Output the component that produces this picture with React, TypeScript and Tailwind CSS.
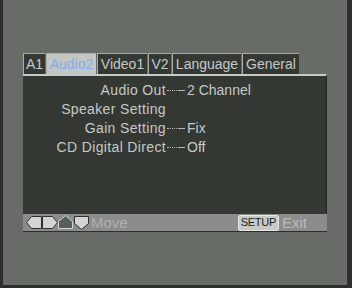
const tabs = [
  { label: "A1", w: "w-[22px]" },
  { label: "Audio2", w: "w-[50px]", active: true },
  { label: "Video1", w: "w-[50px]" },
  { label: "V2", w: "w-[23px]" },
  { label: "Language", w: "w-[69px]" },
  { label: "General", w: "w-[57px]" },
]

const rows = [
  { label: "Audio Out", value: "2 Channel" },
  { label: "Speaker Setting", value: "" },
  { label: "Gain Setting", value: "Fix" },
  { label: "CD Digital Direct", value: "Off" },
]

const Leader = () => (
  <span className="flex items-center ml-[1px] w-[18px] h-[19px]">
    <span className="w-[10px] border-t border-dotted border-[#b8bab8]"></span>
    <span className="w-[7px] ml-[1px] border-t border-[#b8bab8]"></span>
  </span>
)

const App = () => {
  return (
    <div className="w-[352px] h-[288px] bg-[#2c2f2c] overflow-hidden" style={{ fontFamily: '"Liberation Sans", Arial, sans-serif' }}>
      <div className="w-[344px] h-[285px] ml-[3px] bg-[#676c67] pl-[20px] pt-[53px]">
        <div className="flex gap-[1px] h-[21px]">
          {tabs.map((t) => (
            <div
              key={t.label}
              className={`${t.w} h-[21px] flex items-center justify-center border-t border-l border-[#a9aca9] text-[14px] leading-none ${
                t.active ? "bg-[#c4c6c4] text-[#7fb0f0]" : "bg-[#333833] text-[#c6c8c6]"
              }`}
            >
              {t.label}
            </div>
          ))}
        </div>
        <div className="w-[304px] h-[140px] bg-[#333833] border-t-2 border-[#c8cac8] border-r border-r-[#222522] pt-[5px]">
          {rows.map((r) => (
            <div key={r.label} className="flex h-[19px] items-center text-[14px] text-[#c6c8c6] leading-[19px]">
              <span className="w-[143px] text-right tracking-[0.35px]">{r.label}</span>
              {r.value && <Leader />}
              {r.value && <span className="ml-[2px]">{r.value}</span>}
            </div>
          ))}
        </div>
        <div className="w-[304px] h-[18px] bg-[#8a8d8a] border-b border-[#2a2d2a] flex items-center pl-[3px]">
          <svg width="64" height="15" viewBox="0 0 64 15">
            <polygon points="0.5,7.5 5.5,1.5 15.5,1.5 15.5,13.5 5.5,13.5" fill="#d2d4d2" stroke="#2e302e" />
            <polygon points="16.5,1.5 26.5,1.5 31.5,7.5 26.5,13.5 16.5,13.5" fill="#d2d4d2" stroke="#2e302e" />
            <polygon points="32.5,6.5 39.5,0.5 46.5,6.5 46.5,13.5 32.5,13.5" fill="#576057" stroke="#d2d4d2" />
            <polygon points="48.5,1.5 62.5,1.5 62.5,8.5 55.5,14.5 48.5,8.5" fill="#d2d4d2" stroke="#2e302e" />
          </svg>
          <span className="text-[15px] text-[#aeb1ae] leading-none ml-[1px]">Move</span>
          <span className="ml-auto h-[16px] px-[2px] flex items-center bg-[#c8cac8] border border-[#e4e6e4] rounded-[2px] text-[11px] text-[#1c1e1c] leading-none tracking-[-0.3px]">SETUP</span>
          <span className="ml-[3px] mr-[20px] text-[15px] text-[#b8bab8] leading-none">Exit</span>
        </div>
      </div>
    </div>
  )
}

export default App
